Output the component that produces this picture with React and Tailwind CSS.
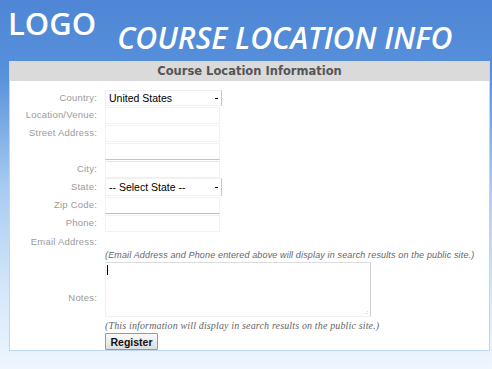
import React from 'react'

const label = "text-right text-[9.5px] text-[#9a9a9a] font-['Liberation_Sans',sans-serif] tracking-[0.2px]"

function Row({ name, h = 'h-[18px]', children }) {
  return (
    <div className={`grid grid-cols-[87px_1fr] gap-x-[8px] items-center ${h}`}>
      <div className={label}>{name}</div>
      <div className="flex items-center h-full">{children}</div>
    </div>
  )
}

function Field({ className = '' }) {
  return <div className={`w-[115px] h-[17px] border border-[#f2f2f2] ${className}`} />
}

function Select({ text, h = 'h-[16px]' }) {
  return (
    <div className={`w-[117px] ${h} border border-[#f0f0f0] border-r-[#c8c8c8] flex items-center justify-between pl-[3px] pr-[3px]`}>
      <span className="text-[10.5px] text-black font-['Liberation_Sans',sans-serif] leading-none">{text}</span>
      <span className="w-[3px] h-[1px] bg-black" />
    </div>
  )
}

export default function App() {
  return (
    <div className="w-full h-[369px] overflow-hidden bg-[linear-gradient(to_bottom,#4e86d5_0%,#5790db_20%,#a6caf2_50%,#d6e8fb_80%,#eef6fe_100%)]">
      <div className="h-[61px] flex items-start text-white font-['Open_Sans',sans-serif]">
        <div className="ml-[8px] mt-[8px] text-[31px] font-semibold leading-none">LOGO</div>
        <div className="ml-[21px] mt-[23px] text-[30.2px] font-semibold italic leading-none">COURSE LOCATION INFO</div>
      </div>

      <div className="ml-[9px] w-[481px] h-[290px] bg-white border border-[#bcd6f4] border-t-[#c6dcf6]">
        <div className="h-[19px] bg-[#dadada] flex items-center justify-center">
          <span className="text-[11.5px] font-bold text-[#555] font-['DejaVu_Sans',sans-serif]">Course Location Information</span>
        </div>

        <div className="pt-[9px] flex flex-col">
          <Row name="Country:" h="h-[16px]"><Select text="United States" /></Row>
          <Row name="Location/Venue:"><Field /></Row>
          <Row name="Street Address:"><Field /></Row>
          <Row name=""><Field className="border-b-[#c4c4c4]" /></Row>
          <Row name="City:"><Field className="border-t-[#e4e4e4]" /></Row>
          <Row name="State:"><Select text="-- Select State --" h="h-[18px]" /></Row>
          <Row name="Zip Code:"><Field className="border-b-[#bdbdbd]" /></Row>
          <Row name="Phone:"><Field /></Row>
          <div className="grid grid-cols-[87px_1fr] gap-x-[8px]">
            <div className={`${label} pt-[3px]`}>Email Address:</div>
            <div className="h-[12px]" />
          </div>
          <div className="grid grid-cols-[87px_1fr] gap-x-[8px]">
            <div />
            <div className="text-[9px] italic text-[#666] font-['Liberation_Sans',sans-serif] leading-[12px] tracking-[0.15px] whitespace-nowrap">
              (Email Address and Phone entered above will display in search results on the public site.)
            </div>
          </div>
          <div className="grid grid-cols-[87px_1fr] gap-x-[8px] mt-[1px]">
            <div className={`${label} pt-[29px]`}>Notes:</div>
            <div className="relative w-[266px] h-[55px] border border-[#f0f0f0] border-t-[#dcdcdc] border-r-[#d0d0d0]">
              <div className="absolute left-[1px] top-[2px] w-[1px] h-[10px] bg-black" />
              <span className="absolute right-[2px] bottom-[1px] text-[6px] leading-none text-[#aaa]">.:</span>
            </div>
          </div>
          <div className="grid grid-cols-[87px_1fr] gap-x-[8px] mt-[3px]">
            <div />
            <div className="text-[10px] italic text-[#666] font-['Liberation_Serif',serif] leading-[12px] tracking-[0.15px] whitespace-nowrap">
              (This information will display in search results on the public site.)
            </div>
          </div>
          <div className="grid grid-cols-[87px_1fr] gap-x-[8px] mt-[1px]">
            <div />
            <div>
              <button className="w-[53px] h-[17px] border border-[#9a9a9a] rounded-[1px] bg-[linear-gradient(to_bottom,#fafafa,#dedede)] text-[10.5px] font-bold text-[#111] font-['Liberation_Sans',sans-serif] leading-none flex items-center justify-center">
                Register
              </button>
            </div>
          </div>
        </div>
      </div>
    </div>
  )
}
